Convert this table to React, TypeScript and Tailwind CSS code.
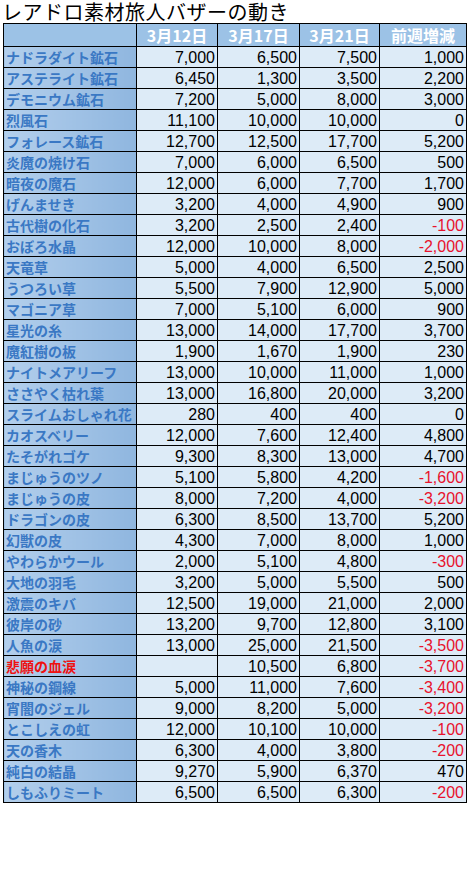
import React from "react";

type Row = [string, string, string, string, string];

const rows: Row[] = [
  ["ナドラダイト鉱石", "7,000", "6,500", "7,500", "1,000"],
  ["アステライト鉱石", "6,450", "1,300", "3,500", "2,200"],
  ["デモニウム鉱石", "7,200", "5,000", "8,000", "3,000"],
  ["烈風石", "11,100", "10,000", "10,000", "0"],
  ["フォレース鉱石", "12,700", "12,500", "17,700", "5,200"],
  ["炎魔の焼け石", "7,000", "6,000", "6,500", "500"],
  ["暗夜の魔石", "12,000", "6,000", "7,700", "1,700"],
  ["げんませき", "3,200", "4,000", "4,900", "900"],
  ["古代樹の化石", "3,200", "2,500", "2,400", "-100"],
  ["おぼろ水晶", "12,000", "10,000", "8,000", "-2,000"],
  ["天竜草", "5,000", "4,000", "6,500", "2,500"],
  ["うつろい草", "5,500", "7,900", "12,900", "5,000"],
  ["マゴニア草", "7,000", "5,100", "6,000", "900"],
  ["星光の糸", "13,000", "14,000", "17,700", "3,700"],
  ["魔紅樹の板", "1,900", "1,670", "1,900", "230"],
  ["ナイトメアリーフ", "13,000", "10,000", "11,000", "1,000"],
  ["ささやく枯れ葉", "13,000", "16,800", "20,000", "3,200"],
  ["スライムおしゃれ花", "280", "400", "400", "0"],
  ["カオスベリー", "12,000", "7,600", "12,400", "4,800"],
  ["たそがれゴケ", "9,300", "8,300", "13,000", "4,700"],
  ["まじゅうのツノ", "5,100", "5,800", "4,200", "-1,600"],
  ["まじゅうの皮", "8,000", "7,200", "4,000", "-3,200"],
  ["ドラゴンの皮", "6,300", "8,500", "13,700", "5,200"],
  ["幻獣の皮", "4,300", "7,000", "8,000", "1,000"],
  ["やわらかウール", "2,000", "5,100", "4,800", "-300"],
  ["大地の羽毛", "3,200", "5,000", "5,500", "500"],
  ["激震のキバ", "12,500", "19,000", "21,000", "2,000"],
  ["彼岸の砂", "13,200", "9,700", "12,800", "3,100"],
  ["人魚の涙", "13,000", "25,000", "21,500", "-3,500"],
  ["悲願の血涙", "", "10,500", "6,800", "-3,700"],
  ["神秘の鋼線", "5,000", "11,000", "7,600", "-3,400"],
  ["宵闇のジェル", "9,000", "8,200", "5,000", "-3,200"],
  ["とこしえの虹", "12,000", "10,100", "10,000", "-100"],
  ["天の香木", "6,300", "4,000", "3,800", "-200"],
  ["純白の結晶", "9,270", "5,900", "6,370", "470"],
  ["しもふりミート", "6,500", "6,500", "6,300", "-200"],
];

const jp = "font-['Noto_Sans_CJK_JP',sans-serif]";
const num = "font-['Liberation_Sans','Noto_Sans_CJK_JP',sans-serif]";

export default function App() {
  return (
    <div className="w-[472px] h-[879px] bg-white">
      <h1 className={`${jp} text-[20px] leading-[23px] text-black pl-[2px] tracking-[0.5px] whitespace-nowrap`}>
        レアドロ素材旅人バザーの動き
      </h1>
      <div className="pl-[3px]">
        <table className="border-collapse table-fixed w-[463px]">
          <colgroup>
            <col className="w-[133px]" />
            <col className="w-[81px]" />
            <col className="w-[82px]" />
            <col className="w-[80px]" />
            <col className="w-[87px]" />
          </colgroup>
          <thead>
            <tr className="h-[23px] bg-[#9cc2e6]">
              <th className="border border-black p-0"></th>
              {["3月12日", "3月17日", "3月21日", "前週増減"].map((h) => (
                <th
                  key={h}
                  className={`${jp} border border-black p-0 text-center text-[16px] leading-[20px] font-bold text-white whitespace-nowrap`}
                >
                  {h}
                </th>
              ))}
            </tr>
          </thead>
          <tbody>
            {rows.map((r) => {
              const special = r[0] === "悲願の血涙";
              return (
                <tr key={r[0]} className="h-[21px]">
                  <td
                    className={`${jp} border border-black bg-gradient-to-r from-[#b3cfec] to-[#8fb6df] px-[2px] py-0 text-[14px] leading-[19px] font-bold whitespace-nowrap overflow-hidden ${
                      special ? "text-[#ee1111]" : "text-[#3a78c4]"
                    }`}
                  >
                    {r[0]}
                  </td>
                  {r.slice(1).map((v, i) => (
                    <td
                      key={i}
                      className={`${num} border border-black bg-[#ddebf7] pl-0 pr-[2px] py-0 text-right text-[16px] leading-[19px] ${
                        i === 3 && v.startsWith("-") ? "text-[#e8122d]" : "text-black"
                      }`}
                    >
                      {v}
                    </td>
                  ))}
                </tr>
              );
            })}
          </tbody>
        </table>
      </div>
    </div>
  );
}
